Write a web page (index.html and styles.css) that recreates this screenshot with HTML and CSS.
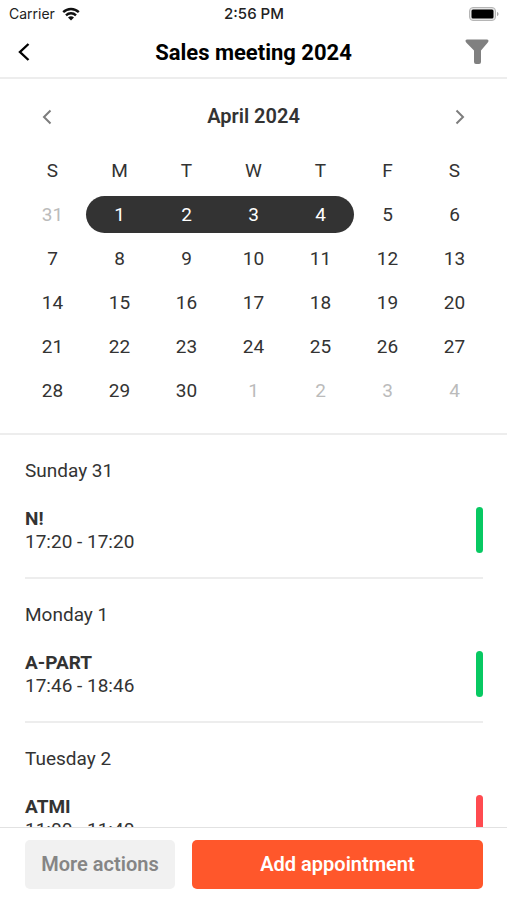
FILE: index.html
```html
<!DOCTYPE html>
<html lang="en">
<head>
<meta charset="utf-8">
<meta name="viewport" content="width=device-width, initial-scale=1">
<title>Sales meeting 2024</title>
<link rel="stylesheet" href="styles.css">
</head>
<body>
<div class="status">
  <div class="carrier">
    <span>Carrier</span>
    <svg class="wifi" viewBox="0 0 18 14" aria-hidden="true">
      <path d="M1.2 5.2a11.2 11.2 0 0 1 15.6 0M4 8.3a7.2 7.2 0 0 1 10 0" fill="none" stroke="#111" stroke-width="2.4"/>
      <path d="M6 10.6a4.3 4.3 0 0 1 6 0L9 13.6z" fill="#111"/>
    </svg>
  </div>
  <time class="clock">2:56 PM</time>
  <svg class="battery" viewBox="0 0 30 14" aria-hidden="true">
    <rect x=".5" y=".5" width="26" height="13" rx="3.5" fill="#e4e4e4" stroke="#b5b5b5"/>
    <rect x="2.5" y="2.5" width="22" height="9" rx="1.5" fill="#000"/>
    <path d="M28 5c2 .6 2 3.4 0 4z" fill="#a8a8a8"/>
  </svg>
</div>
<header class="header">
  <button class="icon-button back-button" type="button" aria-label="Back">
    <svg class="back" viewBox="0 0 12 20" aria-hidden="true"><path d="M10.5 2 2 10l8.500 8" fill="none" stroke="#000" stroke-width="2.400"/></svg>
  </button>
  <h1 class="title">Sales meeting 2024</h1>
  <button class="icon-button filter-button" type="button" aria-label="Filter">
    <svg class="filter" viewBox="0 0 24 26" aria-hidden="true"><path d="M2 .5h20q2 0 1.400 2-.2.600-.8 1.200L16 11.500v11.500q0 2-2 2h-3q-2 0-2-2V11.500L1.400 3.700Q.8 3.100.6 2.500 0 .5 2 .5z" fill="#808080"/></svg>
  </button>
</header>
<section class="calendar" aria-label="Calendar">
  <div class="month">
    <button class="icon-button" type="button" aria-label="Previous month">
      <svg class="arrow" viewBox="0 0 10 16" aria-hidden="true"><path d="M8.500 1.500 2 8l6.500 6.500" fill="none" stroke="#7d7d7d" stroke-width="2"/></svg>
    </button>
    <h2 class="month-name">April 2024</h2>
    <button class="icon-button" type="button" aria-label="Next month">
      <svg class="arrow" viewBox="0 0 10 16" aria-hidden="true"><path d="M1.500 1.500 8 8l-6.500 6.500" fill="none" stroke="#7d7d7d" stroke-width="2"/></svg>
    </button>
  </div>
  <table class="days">
    <thead>
      <tr><th>S</th><th>M</th><th>T</th><th>W</th><th>T</th><th>F</th><th>S</th></tr>
    </thead>
    <tbody>
      <tr>
        <td><button type="button" class="day outside">31</button></td>
        <td><button type="button" class="day selected first">1</button></td>
        <td><button type="button" class="day selected">2</button></td>
        <td><button type="button" class="day selected">3</button></td>
        <td><button type="button" class="day selected last">4</button></td>
        <td><button type="button" class="day">5</button></td>
        <td><button type="button" class="day">6</button></td>
      </tr>
      <tr>
        <td><button type="button" class="day">7</button></td>
        <td><button type="button" class="day">8</button></td>
        <td><button type="button" class="day">9</button></td>
        <td><button type="button" class="day">10</button></td>
        <td><button type="button" class="day">11</button></td>
        <td><button type="button" class="day">12</button></td>
        <td><button type="button" class="day">13</button></td>
      </tr>
      <tr>
        <td><button type="button" class="day">14</button></td>
        <td><button type="button" class="day">15</button></td>
        <td><button type="button" class="day">16</button></td>
        <td><button type="button" class="day">17</button></td>
        <td><button type="button" class="day">18</button></td>
        <td><button type="button" class="day">19</button></td>
        <td><button type="button" class="day">20</button></td>
      </tr>
      <tr>
        <td><button type="button" class="day">21</button></td>
        <td><button type="button" class="day">22</button></td>
        <td><button type="button" class="day">23</button></td>
        <td><button type="button" class="day">24</button></td>
        <td><button type="button" class="day">25</button></td>
        <td><button type="button" class="day">26</button></td>
        <td><button type="button" class="day">27</button></td>
      </tr>
      <tr>
        <td><button type="button" class="day">28</button></td>
        <td><button type="button" class="day">29</button></td>
        <td><button type="button" class="day">30</button></td>
        <td><button type="button" class="day outside">1</button></td>
        <td><button type="button" class="day outside">2</button></td>
        <td><button type="button" class="day outside">3</button></td>
        <td><button type="button" class="day outside">4</button></td>
      </tr>
    </tbody>
  </table>
</section>
<main class="agenda">
  <section class="group">
    <h3 class="date">Sunday 31</h3>
    <article class="entry">
      <div><h4 class="name">N!</h4><p class="time">17:20 - 17:20</p></div>
      <span class="marker green"></span>
    </article>
  </section>
  <section class="group">
    <h3 class="date">Monday 1</h3>
    <article class="entry">
      <div><h4 class="name">A-PART</h4><p class="time">17:46 - 18:46</p></div>
      <span class="marker green"></span>
    </article>
  </section>
  <section class="group">
    <h3 class="date">Tuesday 2</h3>
    <article class="entry">
      <div><h4 class="name">ATMI</h4><p class="time">11:00 - 11:40</p></div>
      <span class="marker red"></span>
    </article>
  </section>
</main>
<footer class="actions">
  <button class="action secondary" type="button">More actions</button>
  <button class="action primary" type="button">Add appointment</button>
</footer>
</body>
</html>
```
FILE: styles.css
```css
* {
  box-sizing: border-box;
}

body {
  display: flex;
  flex-direction: column;
  height: 100vh;
  margin: 0;
  background: #fff;
  color: #333;
  font: 400 19px/23px Roboto, sans-serif;
}

h1, h2, h3, h4, p {
  margin: 0;
  font-size: inherit;
}

button {
  padding: 0;
  border: 0;
  background: none;
  color: inherit;
  font: inherit;
  cursor: pointer;
}

svg {
  display: block;
}

.status {
  display: grid;
  grid-template-columns: 1fr auto 1fr;
  align-items: center;
  flex: none;
  height: 27px;
  padding: 0 8px 0 9px;
  color: #222;
  font: 400 14px/20px Inter, sans-serif;
}

.carrier {
  display: flex;
  align-items: center;
  gap: 7px;
}

.wifi {
  width: 18px;
  height: 14px;
}

.clock {
  font-size: 15px;
  font-weight: 500;
}

.battery {
  justify-self: end;
  width: 30px;
  height: 14px;
}

.header {
  display: flex;
  align-items: center;
  justify-content: space-between;
  flex: none;
  height: 52px;
  padding: 0 18px;
  border-bottom: 2px solid #ededed;
}

.icon-button {
  display: flex;
  align-items: center;
  justify-content: center;
  width: 36px;
  height: 44px;
}

.back-button {
  justify-content: flex-start;
}

.filter-button {
  justify-content: flex-end;
}

.back {
  width: 12px;
  height: 20px;
}

.filter {
  width: 24px;
  height: 26px;
}

.title {
  color: #000;
  font-size: 22px;
  font-weight: 700;
}

.calendar {
  flex: none;
  padding: 6px 19px 21px;
  border-bottom: 2px solid #ededed;
}

.month {
  display: flex;
  align-items: center;
  justify-content: space-between;
  height: 63px;
  padding: 0 10px;
}

.month-name {
  font-size: 20px;
  font-weight: 600;
}

.arrow {
  width: 10px;
  height: 16px;
}

.days {
  width: 100%;
  table-layout: fixed;
  border-collapse: collapse;
}

.days th,
.days td {
  height: 44px;
  padding: 0;
  font-weight: 400;
  text-align: center;
  vertical-align: middle;
}

.day {
  display: block;
  width: 100%;
  height: 37px;
}

.days .outside {
  color: #bbb;
}

.selected {
  background: #333;
  color: #fff;
}

.first {
  border-radius: 19px 0 0 19px;
}

.last {
  border-radius: 0 19px 19px 0;
}

.agenda {
  flex: 1;
  min-height: 0;
  padding: 0 24px 0 25px;
  overflow-y: auto;
  scrollbar-width: none;
}

.group {
  padding: 24px 0;
  border-bottom: 2px solid #ededed;
}

.date {
  margin-bottom: 24px;
  font-weight: 400;
  line-height: 24px;
}

.entry {
  display: flex;
  justify-content: space-between;
}

.name {
  font-weight: 700;
}

.marker {
  width: 7px;
  border-radius: 4px;
}

.green {
  background: #07c962;
}

.red {
  background: #ff4b50;
}

.actions {
  display: flex;
  gap: 17px;
  flex: none;
  padding: 12px 24px 11px 25px;
  border-top: 1px solid #e2e2e2;
}

.action {
  height: 49px;
  border-radius: 5px;
  font-size: 20px;
  font-weight: 600;
}

.secondary {
  flex: 150;
  background: #f1f1f1;
  color: #858585;
}

.primary {
  flex: 291;
  background: #ff572b;
  color: #fff;
}
```
